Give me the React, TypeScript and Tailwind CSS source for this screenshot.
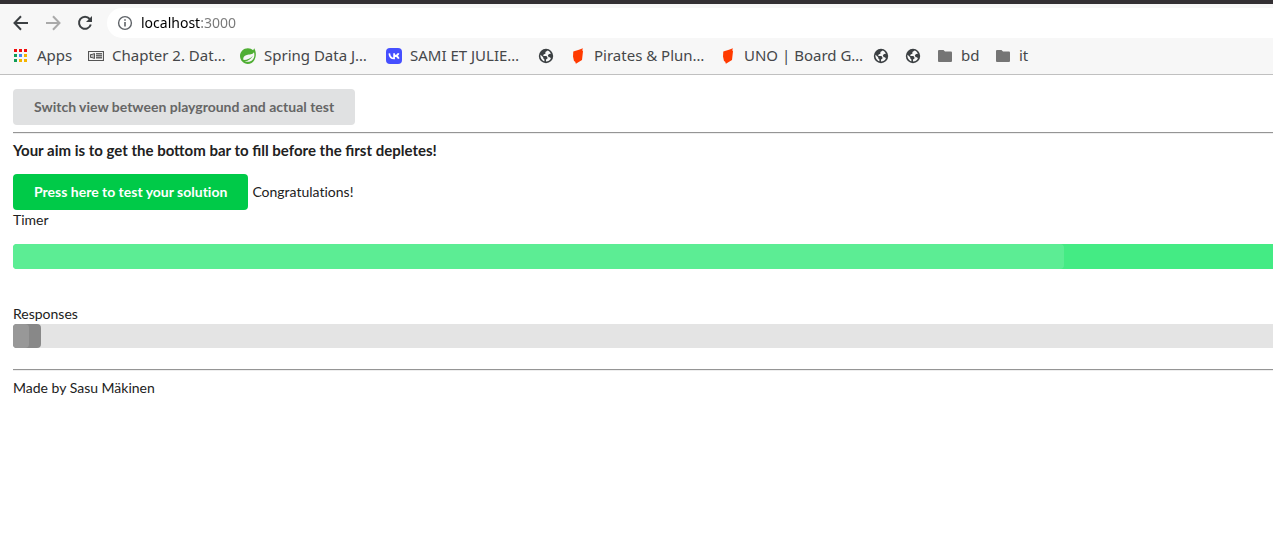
import type { ReactNode } from 'react';

function Globe() {
  return (
    <svg viewBox="0 0 16 16" className="size-4 shrink-0" aria-hidden="true">
      <circle cx="8" cy="8" r="7.200" fill="#3c4043" />
      <path
        d="M9.700 2.500 7.400 4v1.700L5.600 6.500 5.200 8h3.200l1 1.200v1.600L8 11.400v2.200c2.200 0 4-1.200 4.900-3l-.9-1.400h-1.300L9.800 7.300l1.300-1.200 1.800-.3C12.300 4.300 11.200 3.100 9.700 2.500ZM2.500 6.700C2 9.600 3.700 12.300 6.400 13.300V11.500L5.200 10.300V9.200L2.500 6.700Z"
        fill="#f7f7f7"
      />
    </svg>
  );
}

function Folder() {
  return (
    <svg viewBox="0 0 16 16" className="size-4 shrink-0" aria-hidden="true">
      <path d="M2.300 2H6.500L8 3.500h5.700c.8 0 1.300.5 1.300 1.300v7.900c0 .8-.5 1.300-1.300 1.300H2.300C1.500 14 1 13.500 1 12.700V3.300C1 2.500 1.500 2 2.300 2Z" fill="#757575" />
    </svg>
  );
}

function Shard() {
  return (
    <svg viewBox="0 0 16 16" className="size-4 shrink-0" aria-hidden="true">
      <path d="M3.300 3.600 9 1.700 12.900.3 12.300 2.300 13 3.200 12 12 5.900 15.700 5.200 13.800 4 13 3 8.500Z" fill="#ff3a00" />
    </svg>
  );
}

function Apps() {
  const dots = ['#f20d0d', '#f20d0d', '#f20d0d', '#0f9d58', '#4285f4', '#f4b400', '#0f9d58', '#f4b400', '#f4b400'];
  return (
    <svg viewBox="0 0 16 16" className="size-4 shrink-0" shapeRendering="crispEdges" aria-hidden="true">
      {dots.map((fill, i) => (
        <rect key={i} x={1 + (i % 3) * 5} y={1 + Math.floor(i / 3) * 5} width="3" height="3" fill={fill} />
      ))}
    </svg>
  );
}

function Reader() {
  return (
    <svg viewBox="0 0 16 16" className="size-4 shrink-0" aria-hidden="true">
      <path d="M.5 3.500h15v9H.5z" fill="#f7f7f7" stroke="#555" strokeWidth="1.200" />
      <path d="M8 5h6v6H8z" fill="#aaa" />
      <path d="M8 5.500h6M8 7.500h6M8 9.500h6" stroke="#666" />
      <path d="M2.500 6.500h1.500l2.500-1v5L4 9.500H2.500z" fill="#bbb" stroke="#555" />
    </svg>
  );
}

function Spring() {
  return (
    <svg viewBox="0 0 16 16" className="size-4 shrink-0" aria-hidden="true">
      <path d="M14.200.3C16.500 4.500 16.200 8.500 14.400 11.900 13 14.400 10.500 16 7.800 16 3.500 16 0 12.500 0 8.100 0 3.700 3.500.2 7.900.2c2.100 0 3.900.8 5.200 2.100.5-.6.800-1.200 1.100-2Z" fill="#4fae33" />
      <path d="M14 4.200C12.400 6.700 9.500 6.200 6.800 6.900 3.900 7.700 2.600 9.900 3.500 12.100 7.500 11.900 10.700 10.300 13 7.400 11.100 11.200 7.900 13 4.700 13.500 8.100 14.300 11.200 13.700 13 11.300 14.600 9.200 14.700 6.700 14 4.200Z" fill="#f7f7f7" />
    </svg>
  );
}

function Vk() {
  return (
    <svg viewBox="0 0 16 16" className="size-4 shrink-0" aria-hidden="true">
      <rect width="16" height="16" rx="4" fill="#454fff" />
      <path d="M3.300 5.300c.3 3.300 2 5.200 4.800 5.200V5.300M12.600 5.300C12 7 10.500 7.900 8.300 7.900c2.200 0 3.700.8 4.500 2.700" fill="none" stroke="#fff" strokeWidth="1.700" />
    </svg>
  );
}

function Bookmark({ icon, label, text, width = '' }: { icon: ReactNode; label: string; text?: string; width?: string }) {
  return (
    <a href="#" aria-label={text ? undefined : label} className="flex items-center gap-2">
      {icon}
      {text && <span className={`whitespace-nowrap ${width}`}>{text}</span>}
    </a>
  );
}

function Rule() {
  return <hr className="h-0.5 border-t border-b border-t-[#959595] border-b-[#eeeeee]" />;
}

export default function App() {
  return (
    <div className="min-h-screen overflow-x-hidden bg-white">
      <header className="border-t-4 border-b border-t-[#333033] border-b-[#c0c0c0] bg-[#f7f7f7] pt-1 font-['Noto_Sans',sans-serif] text-sm text-[#45474a]">
        <div className="flex h-[30px] items-center pl-[13px]">
          <nav className="flex items-center gap-4" aria-label="History">
            <button aria-label="Back">
              <svg viewBox="0 0 16 16" className="size-4" fill="none" stroke="#3c4043" strokeWidth="2">
                <path d="M15 8H2M8 1.300 1.500 8 8 14.700" />
              </svg>
            </button>
            <button aria-label="Forward">
              <svg viewBox="0 0 16 16" className="size-4" fill="none" stroke="#aaa" strokeWidth="2">
                <path d="M1 8h13M8 1.300 14.500 8 8 14.700" />
              </svg>
            </button>
            <button aria-label="Reload">
              <svg viewBox="0 0 16 16" className="size-4" fill="none" stroke="#3c4043" strokeWidth="2">
                <path d="M12.700 4A6 6 0 1 0 13.800 9.500" />
                <path d="M15 1v6H9z" fill="#3c4043" stroke="none" />
              </svg>
            </button>
          </nav>
          <div className="ml-[14px] flex h-full flex-1 items-center gap-2 rounded-l-full bg-white pl-[10px]">
            <svg viewBox="0 0 16 16" className="size-4 shrink-0" fill="none" stroke="#5f6368" aria-hidden="true">
              <circle cx="8" cy="8" r="6.400" strokeWidth="1.400" />
              <path d="M8 7v4.500M8 4.200v1.600" strokeWidth="1.600" />
            </svg>
            <input
              aria-label="Address"
              defaultValue="localhost:3000"
              className="min-w-0 flex-1 bg-[linear-gradient(to_right,#000_60px,#777_60px)] bg-clip-text text-sm text-transparent outline-none"
            />
          </div>
        </div>
        <nav className="flex h-9 items-center gap-4 overflow-hidden pl-[13px] text-[15px]" aria-label="Bookmarks">
          <Bookmark icon={<Apps />} label="Apps" text="Apps" width="w-[35px]" />
          <Bookmark icon={<Reader />} label="Chapter 2" text="Chapter 2. Dat…" width="w-28" />
          <Bookmark icon={<Spring />} label="Spring" text="Spring Data J…" width="w-[106px]" />
          <Bookmark icon={<Vk />} label="VK" text="SAMI ET JULIE…" width="w-28" />
          <Bookmark icon={<Globe />} label="Website" />
          <Bookmark icon={<Shard />} label="Pirates" text="Pirates & Plun…" width="w-[110px]" />
          <Bookmark icon={<Shard />} label="UNO" text="UNO | Board G…" width="w-[113px]" />
          <Bookmark icon={<Globe />} label="Website" />
          <Bookmark icon={<Globe />} label="Website" />
          <Bookmark icon={<Folder />} label="bd" text="bd" width="w-[18px]" />
          <Bookmark icon={<Folder />} label="it" text="it" />
        </nav>
      </header>

      <main className="pt-[14px] pl-[13px] font-[Lato,sans-serif] text-sm leading-5 text-[#212121]">
        <button className="mb-[7px] block h-9 rounded-sm bg-[#e0e1e2] px-[21px] font-bold text-[#666]">
          Switch view between playground and actual test
        </button>
        <Rule />
        <h1 className="mt-1.5 mb-3.5 text-[15px] leading-5 font-bold">
          Your aim is to get the bottom bar to fill before the first depletes!
        </h1>
        <div className="flex items-center gap-1 [font-variant-ligatures:none]">
          <button className="h-9 rounded-sm bg-[#00ca48] px-[21px] font-bold text-white">
            Press here to test your solution
          </button>
          <span>Congratulations!</span>
        </div>
        <p>Timer</p>
        <div className="mt-3.5 h-[25px] rounded-l-sm bg-[#44eb84]" role="progressbar" aria-label="Timer" aria-valuenow={100}>
          <div className="h-full w-[83.4%] rounded-sm bg-[#5ced94]" />
        </div>
        <p className="mt-[35px]">Responses</p>
        <div className="h-6 rounded-l-sm bg-[#e4e4e4]" role="progressbar" aria-label="Responses" aria-valuenow={2}>
          <div className="h-full w-7 rounded-sm bg-[#888]">
            <div className="h-full w-4 rounded-sm bg-[#989898]" />
          </div>
        </div>
        <div className="mt-[21px]">
          <Rule />
        </div>
        <footer className="mt-[7px]">Made by Sasu Mäkinen</footer>
      </main>
    </div>
  );
}
